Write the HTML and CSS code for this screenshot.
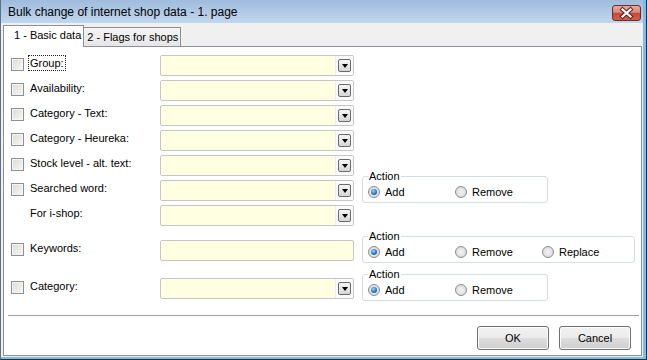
FILE: index.html
```html
<!DOCTYPE html>
<html lang="en">
<head>
  <meta charset="UTF-8" />
  <title>Bulk change of internet shop data</title>
  <link rel="stylesheet" href="styles.css">
</head>
<body>
  <div class="window">
    <div class="titlebar">
      <span class="title">Bulk change of internet shop data - 1. page</span>
      <button class="close" aria-label="Close">
        <svg width="27" height="14" viewBox="0 0 27 14">
          <path d="M9.5 3.5 L17.5 10.5 M17.5 3.5 L9.5 10.5" stroke="#5b2323" stroke-width="4.2" stroke-linecap="square" fill="none"/>
          <path d="M9.5 3.5 L17.5 10.5 M17.5 3.5 L9.5 10.5" stroke="#fff" stroke-width="2.2" stroke-linecap="square" fill="none"/>
        </svg>
      </button>
    </div>

    <div class="client">
      <div class="tabs">
        <div class="tab active">1 - Basic data</div>
        <div class="tab">2 - Flags for shops</div>
      </div>

      <div class="panel">
        <div class="form">
          <div class="row">
            <span class="check"></span>
            <span class="label"><span class="focus">Group:</span></span>
            <div class="combo"><span class="field"></span><span class="drop"><span class="drop-btn"></span></span></div>
          </div>
          <div class="row">
            <span class="check"></span>
            <span class="label">Availability:</span>
            <div class="combo"><span class="field"></span><span class="drop"><span class="drop-btn"></span></span></div>
          </div>
          <div class="row">
            <span class="check"></span>
            <span class="label">Category - Text:</span>
            <div class="combo"><span class="field"></span><span class="drop"><span class="drop-btn"></span></span></div>
          </div>
          <div class="row">
            <span class="check"></span>
            <span class="label">Category - Heureka:</span>
            <div class="combo"><span class="field"></span><span class="drop"><span class="drop-btn"></span></span></div>
          </div>
          <div class="row">
            <span class="check"></span>
            <span class="label">Stock level - alt. text:</span>
            <div class="combo"><span class="field"></span><span class="drop"><span class="drop-btn"></span></span></div>
          </div>
          <div class="row">
            <span class="check"></span>
            <span class="label">Searched word:</span>
            <div class="combo"><span class="field"></span><span class="drop"><span class="drop-btn"></span></span></div>
            <fieldset class="action">
              <legend>Action</legend>
              <div class="options">
                <span class="opt"><span class="radio checked"></span>Add</span>
                <span class="opt"><span class="radio"></span>Remove</span>
              </div>
            </fieldset>
          </div>
          <div class="row">
            <span class="check hidden"></span>
            <span class="label">For i-shop:</span>
            <div class="combo"><span class="field"></span><span class="drop"><span class="drop-btn"></span></span></div>
          </div>
          <div class="row keywords">
            <span class="check"></span>
            <span class="label">Keywords:</span>
            <div class="combo"><span class="field"></span></div>
            <fieldset class="action wide">
              <legend>Action</legend>
              <div class="options">
                <span class="opt"><span class="radio checked"></span>Add</span>
                <span class="opt"><span class="radio"></span>Remove</span>
                <span class="opt"><span class="radio"></span>Replace</span>
              </div>
            </fieldset>
          </div>
          <div class="row category">
            <span class="check"></span>
            <span class="label">Category:</span>
            <div class="combo"><span class="field"></span><span class="drop"><span class="drop-btn"></span></span></div>
            <fieldset class="action">
              <legend>Action</legend>
              <div class="options">
                <span class="opt"><span class="radio checked"></span>Add</span>
                <span class="opt"><span class="radio"></span>Remove</span>
              </div>
            </fieldset>
          </div>
        </div>

        <div class="separator"></div>
        <div class="buttons">
          <button class="btn">OK</button>
          <button class="btn">Cancel</button>
        </div>
      </div>
    </div>
  </div>
</body>
</html>
```

FILE: styles.css
```css
body {
  margin: 0;
  font-family: "Liberation Sans", Arial, sans-serif;
  font-size: 11px;
  color: #000;
}
.window {
  width: 647px;
  height: 360px;
  box-sizing: border-box;
  display: flex;
  flex-direction: column;
  background: #7dbde8;
  border-left: 1px solid #5f7185;
  border-right: 1px solid #1d3148;
  border-bottom: 1px solid #1d3148;
  padding-right: 3px;
  padding-bottom: 2px;
}
.titlebar {
  height: 23px;
  flex: none;
  display: flex;
  align-items: flex-start;
  justify-content: space-between;
  padding: 0 2px 0 7px;
  background: linear-gradient(#a0bbdc, #c2d7ee);
}
.title {
  margin-top: 5px;
  font-size: 12px;
  line-height: 14px;
}
.close {
  width: 29px;
  height: 16px;
  margin-top: 5px;
  padding: 0;
  box-sizing: border-box;
  border: 1px solid #6e2b2b;
  border-radius: 3px;
  background: linear-gradient(#e6aaa0 0%, #d8887a 45%, #c34a37 52%, #cf6148 100%);
  display: flex;
  align-items: center;
  justify-content: center;
}
.client {
  flex: 1;
  display: flex;
  flex-direction: column;
  background: #f0f0f0;
  padding: 0 1px 1px 2px;
}
.tabs {
  height: 23px;
  flex: none;
  display: flex;
  align-items: flex-end;
}
.tab {
  box-sizing: border-box;
  height: 19px;
  padding: 3px 2px 0 3px;
  line-height: 13px;
  white-space: nowrap;
  border: 1px solid #8d9099;
  border-bottom: none;
  background: linear-gradient(#f4f4f4, #e6e6e6);
  margin-left: -1px;
}
.tab.active {
  height: 22px;
  margin-left: 0;
  margin-bottom: -1px;
  padding: 3px 2px 0 10px;
  background: #fff;
  position: relative;
  z-index: 1;
}
.panel {
  flex: 1;
  background: #fff;
  border: 1px solid #8d9099;
  display: flex;
  flex-direction: column;
}
.form {
  padding: 8px 0 0 7px;
}
.row {
  display: flex;
  align-items: flex-start;
  height: 21px;
  margin-bottom: 4px;
}
.row.keywords {
  margin-top: 14px;
  margin-bottom: 17px;
}
.check {
  width: 13px;
  height: 13px;
  box-sizing: border-box;
  margin: 3px 6px 0 0;
  border: 1px solid #8e8f8f;
  background: linear-gradient(135deg, #dcdcd4, #f8f8f2);
  box-shadow: inset 0 0 0 1px #f6f6f6;
  flex: none;
}
.check.hidden {
  visibility: hidden;
}
.label {
  width: 130px;
  flex: none;
  line-height: 13px;
  margin-top: 2px;
  white-space: nowrap;
}
.focus {
  outline: 1px dotted #222;
  outline-offset: 1px;
}
.combo {
  width: 194px;
  height: 21px;
  box-sizing: border-box;
  flex: none;
  display: flex;
  border: 1px solid #c6c6c6;
  border-radius: 2px;
  background: #ffffe1;
}
.field {
  flex: 1;
}
.drop {
  width: 17px;
  display: flex;
  align-items: center;
  justify-content: center;
  background: #fbfbfb;
  border-left: 1px solid #ececec;
}
.drop-btn {
  width: 13px;
  height: 13px;
  box-sizing: border-box;
  border: 1px solid #6a6a6a;
  border-radius: 2px;
  background: linear-gradient(#f6f6f6, #d6d6d6);
  display: flex;
  align-items: center;
  justify-content: center;
}
.drop-btn::after {
  content: "";
  width: 0;
  height: 0;
  border-left: 3.5px solid transparent;
  border-right: 3.5px solid transparent;
  border-top: 4px solid #000;
}
.action {
  width: 183px;
  box-sizing: border-box;
  flex: none;
  margin: -10px 0 0 8px;
  padding: 2px 5px 3px;
  border: 1px solid #d5dde3;
  border-radius: 3px;
}
.action.wide {
  width: 269px;
}
.action legend {
  padding: 0 1px;
  line-height: 13px;
}
.options {
  display: flex;
  height: 14px;
  align-items: center;
}
.opt {
  width: 87px;
  display: flex;
  align-items: center;
  white-space: nowrap;
}
.radio {
  width: 12px;
  height: 12px;
  box-sizing: border-box;
  margin-right: 5px;
  border-radius: 50%;
  border: 1px solid #8c8c8c;
  background: radial-gradient(circle at 50% 50%, #f4f4f4, #d4d4d4);
  display: flex;
  align-items: center;
  justify-content: center;
}
.radio.checked::after {
  content: "";
  width: 6px;
  height: 6px;
  border-radius: 50%;
  background: radial-gradient(circle at 40% 35%, #9ad8ff, #2277c9 55%, #0c3f74);
}
.separator {
  height: 1px;
  background: #a0a0a0;
  margin: 12px 2px 0 4px;
}
.buttons {
  display: flex;
  justify-content: flex-end;
  gap: 10px;
  margin: 10px 10px 0 0;
}
.btn {
  width: 72px;
  height: 24px;
  padding: 0;
  font-family: "Liberation Sans", Arial, sans-serif;
  font-size: 11px;
  color: #000;
  border: 1px solid #707070;
  border-radius: 3px;
  background: linear-gradient(#f2f2f2 0%, #ebebeb 50%, #dddddd 51%, #cfcfcf 100%);
  box-shadow: inset 0 0 0 1px #fcfcfc;
}
```
